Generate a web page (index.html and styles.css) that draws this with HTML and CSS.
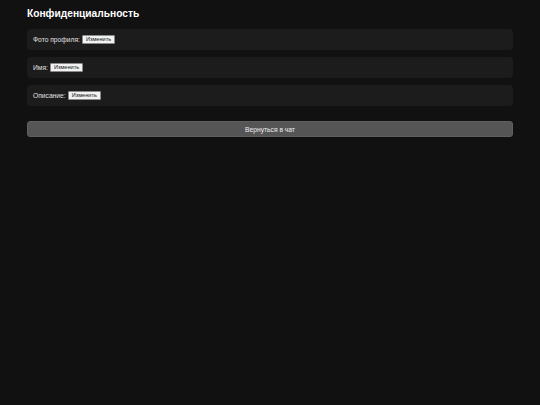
FILE: index.html
```html
<!DOCTYPE html>
<html lang="ru">
<head>
    <meta charset="UTF-8">
    <meta name="viewport" content="width=device-width, initial-scale=1.0">
    <title>Конфиденциальность</title>
    <link rel="stylesheet" href="styles.css">
</head>
<body>
    <div class="container">
        <h2 class="title">Конфиденциальность</h2>

        <div class="setting">
            <label>Фото профиля:</label>
            <button class="edit">Изменить</button>
        </div>

        <div class="setting">
            <label>Имя:</label>
            <button class="edit">Изменить</button>
        </div>

        <div class="setting">
            <label>Описание:</label>
            <button class="edit">Изменить</button>
        </div>

        <button class="back">Вернуться в чат</button>
    </div>
</body>
</html>
```

FILE: styles.css
```css
body {
    margin: 0;
    padding: 8px 27px;
    background-color: #111111;
    color: #ffffff;
    font-family: "Liberation Sans", Arial, sans-serif;
}

.container {
    display: flex;
    flex-direction: column;
    gap: 7px;
}

.title {
    margin: 0 0 2px 0;
    font-size: 10.2px;
    line-height: 12px;
    font-weight: bold;
}

.setting {
    display: flex;
    align-items: center;
    gap: 2px;
    height: 21px;
    padding: 0 6px;
    background-color: #1c1c1c;
    border-radius: 4px;
    font-size: 6.7px;
    color: #e0e0e0;
}

.edit {
    height: 9px;
    padding: 0 3px;
    font-family: "Liberation Sans", Arial, sans-serif;
    font-size: 5.6px;
    line-height: 7px;
    color: #111;
    background-color: #f2f2f2;
    border: 1px solid #8a8a8a;
    border-radius: 1px;
}

.back {
    margin-top: 8px;
    height: 16px;
    padding: 0;
    font-family: "Liberation Sans", Arial, sans-serif;
    font-size: 6.7px;
    color: #eeeeee;
    background-color: #555555;
    border: 1px solid #5f5f5f;
    border-radius: 3px;
    cursor: pointer;
}
```
